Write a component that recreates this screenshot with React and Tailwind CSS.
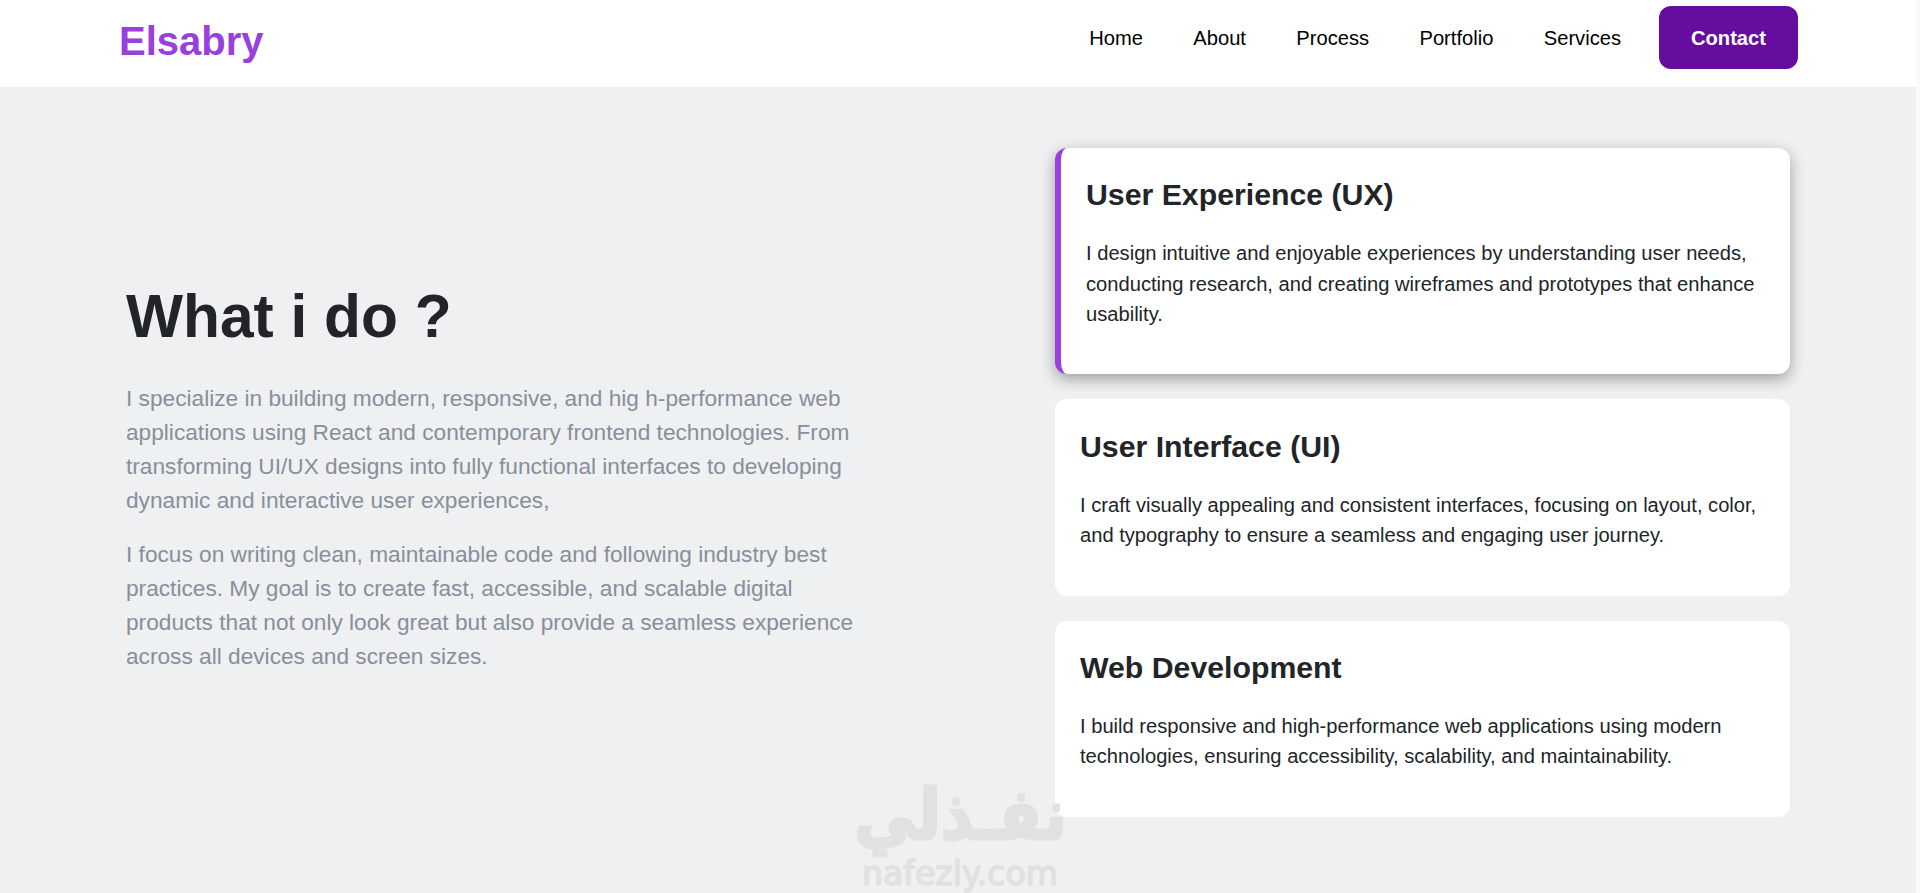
import React, { useState } from 'react';

const navLinks = ['Home', 'About', 'Process', 'Portfolio', 'Services'];

const services = [
  {
    title: 'User Experience (UX)',
    text: 'I design intuitive and enjoyable experiences by understanding user needs, conducting research, and creating wireframes and prototypes that enhance usability.',
  },
  {
    title: 'User Interface (UI)',
    text: 'I craft visually appealing and consistent interfaces, focusing on layout, color, and typography to ensure a seamless and engaging user journey.',
  },
  {
    title: 'Web Development',
    text: 'I build responsive and high-performance web applications using modern technologies, ensuring accessibility, scalability, and maintainability.',
  },
];

const Navbar = () => (
  <nav className="flex h-[87px] shrink-0 justify-between bg-white pl-[119px] pr-[118px]">
    <a href="#home" className="mt-[11px] h-[60px] text-[40px] font-bold leading-[60px] text-[#983fdd]">
      Elsabry
    </a>
    <div className="mt-[6px] flex h-[63px] items-center text-[20.15px] text-black">
      <div className="mr-[38px] flex gap-[50.4px] pt-[2px]">
        {navLinks.map((link) => (
          <a key={link} href={`#${link.toLowerCase()}`}>{link}</a>
        ))}
      </div>
      <button className="h-[63px] w-[139px] cursor-pointer rounded-[12px] bg-[#650d9f] pt-[2px] font-bold text-white">
        Contact
      </button>
    </div>
  </nav>
);

const ServiceCard = ({ title, text, active, onSelect }) => (
  <div
    onMouseEnter={onSelect}
    className={`rounded-[12px] bg-white px-[25px] pt-[24.4px] pb-[45.2px] ${
      active ? 'border-l-[6px] border-[#983fdd] shadow-[0_5px_15px_rgba(0,0,0,0.35)]' : ''
    }`}
  >
    <h3 className="text-[30.25px] font-bold leading-[45px]">{title}</h3>
    <p className="mt-[21.1px] text-[20.15px] leading-[30.2px]">{text}</p>
  </div>
);

const Watermark = () => (
  <svg
    className="pointer-events-none absolute left-[800px] top-[760px] overflow-visible"
    width="320"
    height="133"
    fill="#e1e1e1"
  >
    <text x="54" y="79" textLength="213" lengthAdjust="spacingAndGlyphs" fontFamily="DejaVu Sans, sans-serif" fontWeight="bold" fontSize="70" stroke="#e1e1e1" strokeWidth="3" strokeLinejoin="round">
      نفـذلي
    </text>
    <text x="62" y="125" textLength="196" lengthAdjust="spacingAndGlyphs" fontFamily="DejaVu Sans, sans-serif" fontSize="33" stroke="#e1e1e1" strokeWidth="1.5" strokeLinejoin="round">
      nafezly.com
    </text>
  </svg>
);

const App = () => {
  const [active, setActive] = useState(0);

  return (
    <div className="relative flex h-[893px] overflow-hidden bg-[#fafafc] font-['Liberation_Sans',Arial,sans-serif] text-[#212528]">
      <div className="flex w-[1916px] flex-col">
        <Navbar />
        <main className="flex flex-1 items-start justify-between bg-[#eef0f2] pl-[126px] pr-[126px]">
          <section className="mt-[185px] w-[735px]">
            <h2 className="text-[60.45px] font-bold leading-[89px]">What i do ?</h2>
            <div className="mt-[20.3px] space-y-[20px] text-[22.68px] leading-[34px] text-[#888f9a]">
              <p>
                I specialize in building modern, responsive, and hig h-performance web applications using React and contemporary frontend technologies. From transforming UI/UX designs into fully functional interfaces to developing dynamic and interactive user experiences,
              </p>
              <p>
                I focus on writing clean, maintainable code and following industry best practices. My goal is to create fast, accessible, and scalable digital products that not only look great but also provide a seamless experience across all devices and screen sizes.
              </p>
            </div>
          </section>
          <section className="mt-[61px] flex w-[735px] flex-col gap-[25.2px]">
            {services.map((service, i) => (
              <ServiceCard key={service.title} {...service} active={i === active} onSelect={() => setActive(i)} />
            ))}
          </section>
        </main>
      </div>
      <Watermark />
    </div>
  );
};

export default App;
